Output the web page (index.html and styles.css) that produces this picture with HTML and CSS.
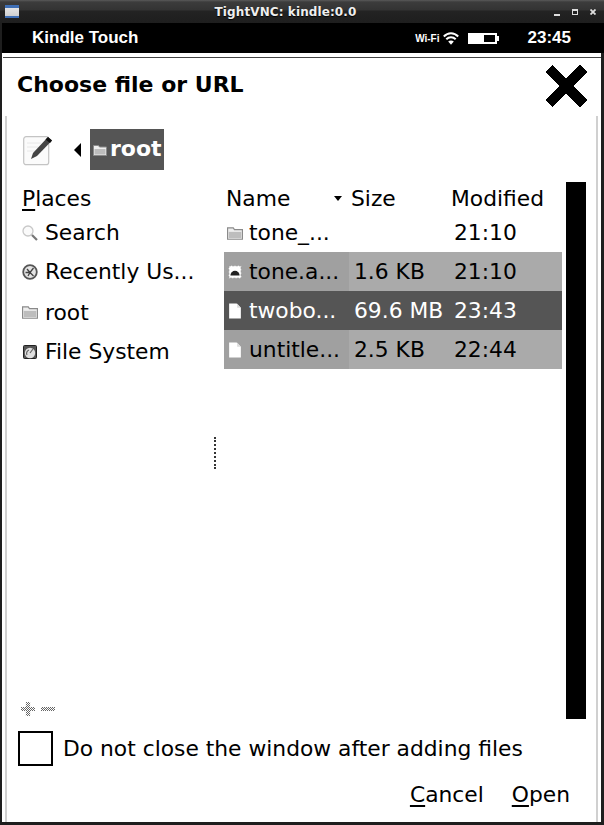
FILE: index.html
```html
<!DOCTYPE html>
<html lang="en">
<head>
    <meta charset="UTF-8">
    <meta name="viewport" content="width=device-width, initial-scale=1.0">
    <title>TightVNC: kindle:0.0</title>
    <link rel="stylesheet" href="styles.css">
</head>
<body>
    <svg class="sprite" xmlns="http://www.w3.org/2000/svg">
        <symbol id="folder" viewBox="0 0 14 12">
            <path d="M0.5 1.5h5l1 1.5h7v8.5h-13z" fill="#eee" stroke="#8a8a8a"/>
            <path d="M1.5 5h11v5.5h-11z" fill="#bdbdbd"/>
        </symbol>
        <symbol id="file" viewBox="0 0 12 15">
            <path d="M0.5 0.5h7l4 4v10h-11z" fill="#fff"/>
            <path d="M8 0.5v4h3.5z" fill="#ddd"/>
        </symbol>
    </svg>
    <div class="window">
        <div class="titlebar">
            <div class="wm-icon"></div>
            <div class="wm-title">TightVNC: kindle:0.0</div>
            <div class="wm-buttons">
                <span class="wm-min"></span>
                <span class="wm-max"></span>
                <svg class="wm-close" viewBox="0 0 6 6"><path d="M0.5 0.5l5 5M5.5 0.5l-5 5" stroke="#ddd" stroke-width="1.8"/></svg>
            </div>
        </div>
        <div class="statusbar">
            <div class="device-name">Kindle Touch</div>
            <div class="wifi-label">Wi-Fi</div>
            <svg class="wifi-icon" viewBox="0 0 16 13">
                <path d="M0.800 4.500c4.200-4.300 10.200-4.300 14.400 0M3.300 7.200c2.700-2.700 6.700-2.700 9.400 0" fill="none" stroke="#fff" stroke-width="2"/>
                <path d="M5.200 9.400c1.500-1.300 4.100-1.300 5.600 0l-2.800 3.300z" fill="#fff"/>
            </svg>
            <div class="battery"><div class="battery-level"></div></div>
            <div class="clock">23:45</div>
        </div>
        <div class="dialog">
            <div class="dialog-head">
                <h1 class="dialog-title">Choose file or URL</h1>
                <svg class="close-x" viewBox="0 0 42 42" shape-rendering="crispEdges">
                    <polygon points="0,7 7,0 21,13 35,0 42,7 28,21 42,35 35,42 21,29 7,42 0,35 14,21"/>
                </svg>
            </div>
            <div class="dialog-body">
                <div class="pathbar">
                    <svg class="edit-icon" viewBox="0 0 30 32">
                        <rect x="0.700" y="2.700" width="25" height="28" rx="2.500" fill="#fbfbfb" stroke="#c4c4c4" stroke-width="1.200"/>
                        <path d="M4 9h14M4 13h11M4 17h9" stroke="#e8e8e8"/>
                        <path d="M25 3l4 3.500-15 15.500-6 3 2-6z" fill="#444"/>
                        <path d="M25 3l4 3.500-2 2.500-4.500-3.500z" fill="#111"/>
                    </svg>
                    <span class="back-arrow"></span>
                    <div class="crumb">
                        <svg class="crumb-icon"><use href="#folder"/></svg>
                        <span class="crumb-label">root</span>
                    </div>
                </div>
                <div class="panes">
                    <div class="places">
                        <div class="places-head"><u>P</u>laces</div>
                        <div class="place">
                            <svg class="icon" viewBox="0 0 16 16">
                                <circle cx="6" cy="6" r="5" fill="#fafafa" stroke="#c8c8c8" stroke-width="1.300"/>
                                <path d="M10 10l5 5" stroke="#777" stroke-width="2.200"/>
                            </svg>
                            <span>Search</span>
                        </div>
                        <div class="place">
                            <svg class="icon" viewBox="0 0 16 16">
                                <circle cx="8" cy="8" r="6.800" fill="#e4e4e4" stroke="#555" stroke-width="1.800"/>
                                <path d="M3.500 8.500h4.500l3.500-4.500M8 8.500l3.500 3.500M5 5l3 3.500M6 12l2-3.500" stroke="#444" stroke-width="1.300" fill="none"/>
                            </svg>
                            <span>Recently Us...</span>
                        </div>
                        <div class="place place-tall">
                            <svg class="icon"><use href="#folder"/></svg>
                            <span>root</span>
                        </div>
                        <div class="place">
                            <svg class="icon" viewBox="0 0 16 16">
                                <rect x="1.500" y="1.500" width="13" height="13" rx="1" fill="#555" stroke="#222"/>
                                <circle cx="8" cy="9" r="5.200" fill="#e0e0e0"/>
                                <path d="M8 9l3-4M5 11a3.500 3.500 0 0 1 2-5" stroke="#666" stroke-width="1.200" fill="none"/>
                            </svg>
                            <span>File System</span>
                        </div>
                        <div class="place-tools">
                            <span class="tool-plus"></span>
                            <span class="tool-minus"></span>
                        </div>
                    </div>
                    <div class="handle"></div>
                    <div class="files">
                        <div class="file-head">
                            <div class="col-name">Name<span class="sort-arrow"></span></div>
                            <div class="col-size">Size</div>
                            <div class="col-date">Modified</div>
                        </div>
                        <div class="file-row">
                            <div class="cell-name">
                                <svg class="icon"><use href="#folder"/></svg>
                                <span>tone_...</span>
                            </div>
                            <div class="cell-size"></div>
                            <div class="cell-date">21:10</div>
                        </div>
                        <div class="file-row row-grey">
                            <div class="cell-name">
                                <svg class="icon" viewBox="0 0 14 14">
                                    <rect x="1.500" y="1.500" width="11" height="11" fill="#fff" stroke="#999" stroke-dasharray="2 1"/>
                                    <path d="M3 10a4 4 0 0 1 8 0z" fill="#222"/>
                                </svg>
                                <span>tone.a...</span>
                            </div>
                            <div class="cell-size">1.6 KB</div>
                            <div class="cell-date">21:10</div>
                        </div>
                        <div class="file-row row-dark">
                            <div class="cell-name">
                                <svg class="icon"><use href="#file"/></svg>
                                <span>twobo...</span>
                            </div>
                            <div class="cell-size">69.6 MB</div>
                            <div class="cell-date">23:43</div>
                        </div>
                        <div class="file-row row-grey">
                            <div class="cell-name">
                                <svg class="icon"><use href="#file"/></svg>
                                <span>untitle...</span>
                            </div>
                            <div class="cell-size">2.5 KB</div>
                            <div class="cell-date">22:44</div>
                        </div>
                    </div>
                    <div class="scrollbar"></div>
                </div>
                <label class="keep-open">
                    <span class="checkbox"></span>
                    <span>Do not close the window after adding files</span>
                </label>
                <div class="actions">
                    <div class="action"><u>C</u>ancel</div>
                    <div class="action"><u>O</u>pen</div>
                </div>
            </div>
        </div>
    </div>
</body>
</html>
```

FILE: styles.css
```css
body {
    margin: 0;
    font-family: "DejaVu Sans", sans-serif;
    font-size: 21.8px;
    color: #000;
    background: #1e1e1e;
}
u {
    text-underline-offset: 3px;
}
.sprite {
    display: none;
}
.window {
    width: 604px;
    height: 825px;
    display: flex;
    flex-direction: column;
    overflow: hidden;
    background: #1e1e1e;
}

/* window manager title */
.titlebar {
    height: 23px;
    display: flex;
    align-items: center;
    padding: 0 8px 0 5px;
    background: linear-gradient(#5a5a5a 0, #3c3c3c 2px, #333 10px, #232323 11px, #1e1e1e 100%);
}
.wm-icon {
    width: 14px;
    height: 13px;
    background: linear-gradient(#3f6fb5 0, #3f6fb5 3px, #e4e4e4 3px, #cfcfcf 11px, #3f6fb5 11px);
}
.wm-title {
    flex: 1;
    text-align: center;
    color: #eee;
    font-size: 12px;
    font-weight: bold;
    letter-spacing: 0.1px;
    margin-right: 2px;
    text-shadow: 0 1px 1px #000;
}
.wm-buttons {
    display: flex;
    align-items: center;
    gap: 12px;
}
.wm-min {
    width: 6px;
    height: 2px;
    margin-top: 6px;
    background: #ddd;
}
.wm-max {
    width: 4px;
    height: 3px;
    border: 1px solid #ddd;
    border-top-width: 2px;
}
.wm-close {
    width: 6px;
    height: 6px;
}

/* kindle status bar */
.statusbar {
    height: 30px;
    margin-left: 2px;
    display: flex;
    align-items: center;
    background: #000;
    color: #fff;
    font-family: "Liberation Sans", Arial, sans-serif;
    font-weight: bold;
}
.device-name {
    margin-left: 30px;
    font-size: 17px;
    flex: 1;
}
.wifi-label {
    font-size: 10px;
}
.wifi-icon {
    width: 16px;
    height: 13px;
    margin-left: 3px;
}
.battery {
    width: 25px;
    height: 7px;
    margin-left: 9px;
    border: 2px solid #fff;
    position: relative;
}
.battery::after {
    content: "";
    position: absolute;
    right: -4px;
    top: 1px;
    width: 2px;
    height: 5px;
    background: #fff;
}
.battery-level {
    width: 14px;
    height: 7px;
    background: #fff;
}
.clock {
    margin-left: 31px;
    margin-right: 33px;
    font-size: 17px;
}

/* dialog */
.dialog {
    flex: 1;
    display: flex;
    flex-direction: column;
    margin: 0 3px 3px 2px;
    background: #fff;
}
.dialog-head {
    height: 59px;
    margin-top: 4px;
    margin-left: 1px;
    padding: 7px 14px 0 14px;
    box-sizing: border-box;
    display: flex;
    justify-content: space-between;
    align-items: flex-start;
    border-top: 1px solid #444;
}
.dialog-title {
    margin: 1px 0 0;
    font-size: 22px;
    font-weight: bold;
    line-height: 38px;
}
.close-x {
    width: 42px;
    height: 42px;
}
.dialog-body {
    flex: 1;
    display: flex;
    flex-direction: column;
    margin: 0 3px;
    border-left: 2px solid #d0d0d0;
    border-right: 2px solid #d0d0d0;
    padding-top: 13px;
}
.pathbar {
    height: 41px;
    display: flex;
    align-items: center;
    padding-left: 16px;
}
.edit-icon {
    width: 30px;
    height: 32px;
}
.back-arrow {
    width: 0;
    height: 0;
    margin-left: 21px;
    border-style: solid;
    border-width: 7px 7px 7px 0;
    border-color: transparent #000 transparent transparent;
}
.crumb {
    height: 41px;
    margin-left: 9px;
    padding: 0 2px 0 3px;
    display: flex;
    align-items: center;
    gap: 3px;
    background: #555;
    color: #fff;
    font-size: 22px;
    font-weight: bold;
}
.crumb-icon {
    width: 14px;
    height: 12px;
}
.crumb-label {
    margin-top: -2px;
}

.panes {
    height: 537px;
    margin-top: 12px;
    display: flex;
}
.places {
    width: 191px;
    padding-left: 15px;
    display: flex;
    flex-direction: column;
}
.places-head {
    height: 31px;
    line-height: 33px;
}
.place {
    height: 39px;
    display: flex;
    align-items: center;
    gap: 7px;
}
.place-tall {
    height: 41px;
    padding-top: 1px;
    box-sizing: border-box;
}
.icon {
    width: 16px;
    height: 16px;
    flex: none;
}
.place-tools {
    margin-top: auto;
    margin-left: -1px;
    padding-bottom: 3px;
    display: flex;
    align-items: center;
    gap: 6px;
}
/* dithered insensitive icons */
.tool-plus,
.tool-minus {
    background: repeating-conic-gradient(#666 0 25%, #fff 0 50%) 0 0 / 2px 2px;
}
.tool-plus {
    width: 14px;
    height: 14px;
    clip-path: polygon(35% 0, 65% 0, 65% 35%, 100% 35%, 100% 65%, 65% 65%, 65% 100%, 35% 100%, 35% 65%, 0 65%, 0 35%, 35% 35%);
}
.tool-minus {
    width: 14px;
    height: 4px;
}
.handle {
    height: 32px;
    align-self: center;
    margin-top: 4px;
    margin-left: 1px;
    margin-right: 8px;
    border-left: 2px dotted #333;
}
.files {
    width: 338px;
    display: flex;
    flex-direction: column;
}
.file-head,
.file-row {
    display: grid;
    grid-template-columns: 125px 102px 111px;
}
.file-head {
    height: 31px;
    line-height: 33px;
}
.col-name {
    padding-left: 2px;
    position: relative;
}
.sort-arrow {
    position: absolute;
    left: 110px;
    top: 14px;
    border-style: solid;
    border-width: 5px 4.500px 0 4.500px;
    border-color: #000 transparent transparent transparent;
}
.col-size {
    padding-left: 2px;
}
.file-row {
    height: 39px;
    line-height: 39px;
}
.cell-name {
    display: flex;
    align-items: center;
    gap: 6px;
    padding-left: 3px;
    overflow: hidden;
    white-space: nowrap;
}
.cell-size {
    padding-left: 5px;
    white-space: nowrap;
}
.cell-date {
    padding-left: 3px;
}
.row-grey {
    background: #aaa;
}
.row-grey .cell-name {
    background: #a0a0a0;
}
.row-dark {
    background: #555;
    color: #fff;
}
.scrollbar {
    width: 20px;
    margin-left: 4px;
    background: #000;
}

.keep-open {
    margin-top: 12px;
    padding-left: 11px;
    height: 35px;
    display: flex;
    align-items: center;
    gap: 10px;
}
.checkbox {
    width: 31px;
    height: 31px;
    border: 2px solid #000;
}
.actions {
    margin-top: 12px;
    display: flex;
    justify-content: flex-end;
    gap: 28px;
    padding-right: 26px;
    line-height: 34px;
}
```
